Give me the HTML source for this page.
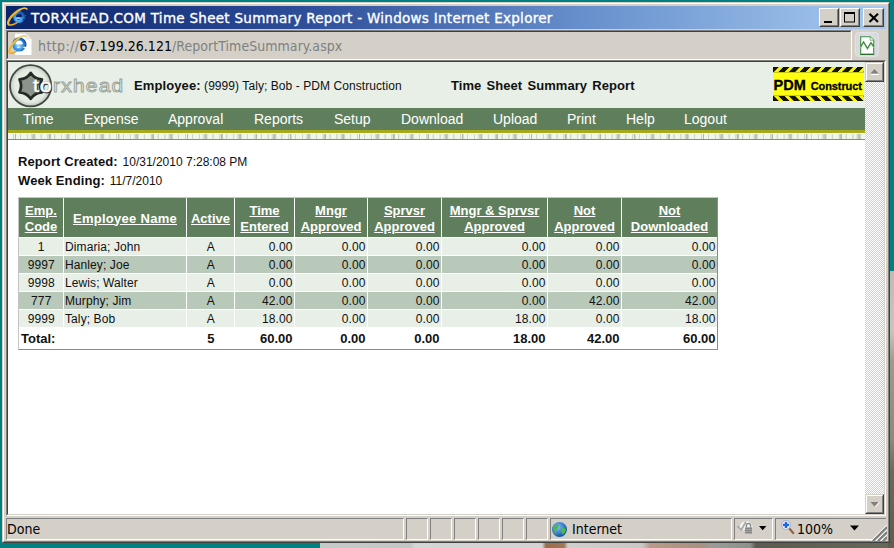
<!DOCTYPE html>
<html>
<head>
<meta charset="utf-8">
<title>TORXHEAD.COM Time Sheet Summary Report</title>
<style>
*{box-sizing:border-box;margin:0;padding:0}
html,body{width:894px;height:548px;overflow:hidden}
body{position:relative;background:#008080;font-family:"Liberation Sans",sans-serif;}
.abs{position:absolute}
#deskphoto{left:320px;top:542px;width:574px;height:6px;background:linear-gradient(90deg,#c6cac9 0,#c2c6c5 90px,#d4d6d5 95px,#d2d3d2 222px,#9a6f4c 226px,#a07858 244px,#cfd0ce 248px,#c8c9c7 322px,#b89a8a 330px,#a89080 380px,#9a9c98 392px,#8e908c 430px,#5a5c50 436px,#66685c 574px);}
#win{left:2px;top:2px;width:888px;height:541px;background:#d4d0c8;border:1px solid;border-color:#d4d0c8 #404040 #404040 #d4d0c8;}
#win2{left:0;top:0;width:886px;height:539px;border:1px solid;border-color:#fff #808080 #808080 #fff;}
#title{left:6px;top:6px;width:880px;height:22.5px;background:linear-gradient(90deg,#0a246a 0,#2c4c98 33%,#6890cc 66%,#a6caf0 100%);}
#title .txt{left:25px;top:2.6px;color:#fff;font-family:"DejaVu Sans","Liberation Sans",sans-serif;font-size:13.5px;letter-spacing:.28px;-webkit-text-stroke:.35px #fff;line-height:19px;white-space:nowrap;}
.tbtn{top:8px;width:20px;height:19px;background:#d4d0c8;border:1px solid;border-color:#fff #404040 #404040 #fff;}
.tbtn:after{content:"";position:absolute;left:0;top:0;right:0;bottom:0;border:1px solid;border-color:#d4d0c8 #808080 #808080 #d4d0c8;}
#addr{left:6px;top:30px;width:846px;height:30px;border:1px solid;border-color:#808080 #fff #fff #808080;background:#d4d0c8;}
#addr:after{content:"";position:absolute;left:0;top:0;right:0;bottom:0;border:1px solid;border-color:#404040 #d4d0c8 #d4d0c8 #404040;}
#addr .txt{left:31px;top:6px;font-family:"DejaVu Sans Condensed","DejaVu Sans","Liberation Sans",sans-serif;font-size:14px;letter-spacing:.04px;line-height:19px;color:#808080;white-space:nowrap;}
#addr .txt b{font-weight:normal;color:#000}
#frame{left:6px;top:60px;width:880px;height:456px;border:1px solid;border-color:#808080 #fff #fff #808080;background:#fff;}
#frame:after{content:"";position:absolute;left:0;top:0;right:0;bottom:0;border:1px solid;border-color:#404040 #d4d0c8 #d4d0c8 #404040;}
#page{left:8px;top:62px;width:857px;height:452px;background:#fff;overflow:hidden;}
#hdr{left:0;top:0;width:857px;height:46px;background:#e7efe7;}
#menu{left:0;top:46px;width:857px;height:22px;background:#5f7f5c;}
#menu span{position:absolute;top:2px;color:#fff;font-size:14px;line-height:18px;white-space:nowrap;}
#oline{left:0;top:68px;width:857px;height:3px;background:#a5a91c;}
#pat{left:0;top:71px;width:857px;height:7px;background-color:#f1f6ea;border-top:1px solid #fbfbd2;border-bottom:1px solid #7f8f7c;
 background-image:repeating-linear-gradient(90deg,transparent 0,transparent 6.500px,rgba(110,130,100,.5) 7px,rgba(110,130,100,.5) 8px,transparent 8.500px,transparent 22px,rgba(105,125,105,.38) 25px,transparent 28.500px,transparent 34.400px),repeating-linear-gradient(90deg,transparent 0,transparent 4.700px,rgba(150,175,140,.4) 5.200px,rgba(150,175,140,.4) 5.900px,transparent 6.400px,transparent 6.880px);}
#vsb{left:864.5px;top:62px;width:19.5px;height:452px;background:#eceae4;
 background-image:conic-gradient(#fff 25%,#d4d0c8 0 50%,#fff 0 75%,#d4d0c8 0);background-size:2px 2px;}
.sbtn{left:0;width:19.5px;height:19.5px;background:#d4d0c8;border:1px solid;border-color:#d4d0c8 #404040 #404040 #d4d0c8;}
.sbtn:after{content:"";position:absolute;left:0;top:0;right:0;bottom:0;border:1px solid;border-color:#fff #808080 #808080 #fff;}
#status{left:6px;top:518px;width:880px;height:22px;}
.pane{top:0;height:22px;border:1px solid;border-color:#808080 #fff #fff #808080;}
.stxt{margin-top:1px;font-family:"DejaVu Sans Condensed","DejaVu Sans",sans-serif;font-size:14px;line-height:19px;color:#000;white-space:nowrap;}
#tw{left:10px;top:135px;width:700px;height:153px;border:1px solid;border-color:#c4c4c4 #8c8c8c #8c8c8c #c4c4c4;background:#fff;overflow:hidden}
table#t{position:absolute;left:-1px;top:-1px;width:700px;table-layout:fixed;border-collapse:separate;border-spacing:1px;background:#fff;font-size:12px;color:#111;}
#t th{background:#5f7f5c;color:#fff;font-weight:bold;font-size:13px;line-height:16px;text-decoration:underline;height:39px;vertical-align:middle;text-align:center;padding:2px 0 0 0;white-space:nowrap}
#t td{height:17px;line-height:15px;padding:2px 1.5px 0 2px;text-align:right;white-space:nowrap;letter-spacing:.1px}
#t tr.a td{background:#e7efe7}
#t tr.b td{background:#b9c9b9}
#t tr.tot td.l{padding-left:2px}
#t tr.tot td{background:#fff;font-weight:bold;height:21px;line-height:20px;padding-top:1px;font-size:13px;color:#111;letter-spacing:0}
#t td.c{text-align:center}
#t td.l{text-align:left;padding-left:1px}
</style>
</head>
<body>
<div id="deskphoto" class="abs"></div>
<div class="abs" style="left:888px;top:271px;width:6px;height:277px;background:linear-gradient(180deg,#bcbcb4 0,#c6c6be 60px,#9c9c8e 90px,#8a8a7a 170px,#6a6a5a 200px,#5e5e50 277px)"></div>
<div id="win" class="abs"><div id="win2" class="abs"></div></div>

<div id="title" class="abs">
  <svg class="abs" style="left:0px;top:0px;overflow:visible" width="24" height="22" viewBox="0 0 24 22">
    <defs><radialGradient id="eg" gradientUnits="userSpaceOnUse" cx="12" cy="12.500" r="8"><stop offset="0" stop-color="#9be0ff"/><stop offset=".45" stop-color="#3c9cf0"/><stop offset="1" stop-color="#0b3f9c"/></radialGradient></defs>
    <path d="M18.65 9.57 L18.13 10.23 L17.57 10.88 L16.98 11.54 L16.35 12.19 L15.69 12.83 L15.02 13.45 L14.32 14.06 L13.60 14.65 L12.87 15.21 L12.14 15.74 L11.40 16.24 L10.66 16.71 L9.93 17.14 L9.21 17.53 L8.50 17.88 L7.82 18.18 L7.16 18.44 L6.52 18.64 L5.91 18.80 L5.34 18.91 L4.81 18.97 L4.32 18.98 L3.88 18.94 L3.48 18.84 L3.13 18.70 L2.83 18.50 L2.59 18.26 L2.40 17.97" fill="none" stroke="#e2a626" stroke-width="1.7" stroke-linecap="round"/><path d="M8.20 12.20 H19.15" stroke="url(#eg)" stroke-width="2.1" fill="none"/><path d="M17.70 12.50 A4.75 4.75 0 1 0 16.93 13.89" stroke="url(#eg)" stroke-width="2.9" fill="none"/>
    <path d="M2.61 18.29 L2.43 18.02 L2.29 17.71 L2.20 17.36 L2.17 16.97 L2.19 16.54 L2.27 16.08 L2.39 15.59 L2.57 15.07 L2.80 14.52 L3.08 13.95 L3.41 13.37 L3.78 12.77 L4.19 12.15 L4.65 11.53 L5.15 10.90 L5.68 10.27 L6.25 9.64 L6.85 9.02 L7.47 8.40 L8.12 7.80 L8.79 7.21 L9.47 6.64 L10.17 6.09 L10.87 5.57 L11.58 5.07 L12.29 4.61 L12.99 4.18 L13.69 3.78" fill="none" stroke="#efb92e" stroke-width="2.3" stroke-linecap="round"/><path d="M13.69 3.78 L14.07 3.58 L14.44 3.39 L14.81 3.22 L15.18 3.05 L15.54 2.90 L15.89 2.76 L16.23 2.63 L16.57 2.52 L16.90 2.42 L17.22 2.34 L17.53 2.26 L17.83 2.21 L18.12 2.16 L18.40 2.13 L18.67 2.12 L18.92 2.12 L19.17 2.13 L19.40 2.16 L19.62 2.20 L19.82 2.26 L20.01 2.33 L20.19 2.41 L20.35 2.51 L20.50 2.62 L20.63 2.74 L20.75 2.88 L20.85 3.03 L20.94 3.20" fill="none" stroke="#efc85a" stroke-width="1.5" stroke-linecap="round"/>
  </svg>
  <div class="txt abs">TORXHEAD.COM Time Sheet Summary Report - Windows Internet Explorer</div>
</div>
<div class="tbtn abs" style="left:819px"><svg class="abs" style="left:0;top:0" width="18" height="16"><rect x="4" y="12" width="8" height="2" fill="#000"/></svg></div>
<div class="tbtn abs" style="left:840px"><svg class="abs" style="left:0;top:0" width="18" height="16"><rect x="3.5" y="4" width="10" height="9" fill="none" stroke="#000" stroke-width="1"/><rect x="3" y="3" width="11" height="2" fill="#000"/></svg></div>
<div class="tbtn abs" style="left:863px;width:21px"><svg class="abs" style="left:0;top:0" width="19" height="16"><path d="M5.500 4.800 L14 13 M14 4.800 L5.500 13" stroke="#000" stroke-width="2.1" fill="none"/></svg></div>

<div id="addr" class="abs">
  <svg class="abs" style="left:1px;top:1px" width="26" height="25" viewBox="0 0 26 25">
    <defs><radialGradient id="eg2" gradientUnits="userSpaceOnUse" cx="10.500" cy="13.500" r="9"><stop offset="0" stop-color="#9be0ff"/><stop offset=".45" stop-color="#3c9cf0"/><stop offset="1" stop-color="#0b3f9c"/></radialGradient></defs>
    <path d="M7 1.800 H18.300 L23.500 7 V23 H7 Z" fill="#fff"/><path d="M18.300 1.800 V7 H23.500 Z" fill="#ececec" stroke="#d4d4d4" stroke-width=".5"/>
    <path d="M16.29 10.68 L15.86 11.35 L15.39 12.03 L14.89 12.71 L14.36 13.40 L13.80 14.07 L13.22 14.74 L12.62 15.39 L12.00 16.02 L11.36 16.63 L10.72 17.22 L10.07 17.77 L9.42 18.30 L8.77 18.78 L8.13 19.23 L7.50 19.64 L6.88 20.00 L6.28 20.32 L5.70 20.59 L5.14 20.81 L4.62 20.98 L4.12 21.09 L3.66 21.16 L3.24 21.17 L2.86 21.13 L2.52 21.03 L2.22 20.88 L1.97 20.68 L1.77 20.43" fill="none" stroke="#e2a626" stroke-width="1.7" stroke-linecap="round"/><path d="M5.55 13.60 H18.20" stroke="url(#eg2)" stroke-width="2.4" fill="none"/><path d="M16.55 13.90 A5.5 5.5 0 1 0 15.66 15.70" stroke="url(#eg2)" stroke-width="3.3" fill="none"/>
    <path d="M2.00 20.71 L1.79 20.48 L1.64 20.20 L1.53 19.88 L1.46 19.51 L1.44 19.11 L1.47 18.67 L1.55 18.19 L1.67 17.69 L1.84 17.15 L2.05 16.58 L2.30 15.99 L2.60 15.39 L2.93 14.76 L3.31 14.12 L3.72 13.48 L4.17 12.82 L4.64 12.17 L5.15 11.51 L5.68 10.86 L6.24 10.22 L6.81 9.59 L7.40 8.98 L8.01 8.39 L8.62 7.81 L9.24 7.27 L9.87 6.75 L10.49 6.27 L11.11 5.81" fill="none" stroke="#efb92e" stroke-width="2.3" stroke-linecap="round"/><path d="M11.11 5.81 L11.45 5.58 L11.79 5.36 L12.12 5.15 L12.45 4.95 L12.77 4.77 L13.09 4.60 L13.40 4.44 L13.71 4.30 L14.01 4.16 L14.30 4.05 L14.59 3.94 L14.87 3.86 L15.14 3.78 L15.40 3.72 L15.65 3.68 L15.89 3.65 L16.12 3.63 L16.34 3.63 L16.55 3.64 L16.74 3.67 L16.93 3.72 L17.10 3.78 L17.26 3.85 L17.41 3.94 L17.55 4.04 L17.67 4.15 L17.78 4.28 L17.87 4.43" fill="none" stroke="#efc85a" stroke-width="1.5" stroke-linecap="round"/>
  </svg>
  <div class="txt abs"><span style="letter-spacing:.4px">http://</span><b>67.199.26.121</b>/ReportTimeSummary.aspx</div>
</div>
<div class="abs" style="left:855px;top:32px;width:24px;height:25px;border:1px solid #e2e2e8;border-radius:3.500px;background:linear-gradient(90deg,#d9d8da,#dddde6 50%,#d9d8da)">
  <svg class="abs" style="left:3px;top:2px" width="18" height="21" viewBox="0 0 18 21"><path d="M1.700 1.800 H11.200 L14.700 5.300 V19.400 H1.700 Z" fill="#fff" stroke="#3f8f43" stroke-width="1.100"/><path d="M11.200 1.800 V5.300 H14.700" fill="#f2f6f2" stroke="#6aaa6c" stroke-width=".8"/><path d="M1.700 19.400 H14.700" stroke="#2c6e30" stroke-width="1.200"/><path d="M1.700 12.700 L4.600 8 L8.400 14.400 L12 8.600 L14.700 12.700" fill="none" stroke="#a4d4a6" stroke-width="1.100"/><path d="M1.700 11.500 L4.600 6.800 L8.400 13.200 L12 7.400 L14.700 11.500" fill="none" stroke="#2f7d33" stroke-width="1.100"/></svg>
</div>

<div id="frame" class="abs"></div>
<div id="page" class="abs">
  <div id="hdr" class="abs">
    <svg class="abs" style="left:0;top:0" width="125" height="46" viewBox="0 0 125 46">
      <defs><radialGradient id="cg" cx="50%" cy="50%" r="50%"><stop offset="0" stop-color="#f4f8f2"/><stop offset=".8" stop-color="#e2eadf"/><stop offset="1" stop-color="#b9c4b8"/></radialGradient></defs>
      <circle cx="22.6" cy="23.7" r="20.6" fill="url(#cg)" stroke="#434843" stroke-width="1.8"/>
      <path d="M22.70 11.00 Q26.70 16.97 33.87 17.45 Q30.70 23.90 33.87 30.35 Q26.70 30.83 22.70 36.80 Q18.70 30.83 11.53 30.35 Q14.70 23.90 11.53 17.45 Q18.70 16.97 22.70 11.00Z" fill="#8a948a" stroke="#262a26" stroke-width="2.8" stroke-linejoin="round"/>
      <g transform="translate(25 30) scale(1.1 1)"><text x="0" y="0" font-family="Liberation Sans,sans-serif" font-size="19" letter-spacing="1.15" fill="#f2f6f1" stroke="#9aa39a" stroke-width=".95">torxhead</text>
      <text x="0.6" y="0.6" font-family="Liberation Sans,sans-serif" font-size="19" letter-spacing="1.15" fill="#333" stroke="#333" stroke-width=".9">to</text>
      <text x="0" y="0" font-family="Liberation Sans,sans-serif" font-size="19" letter-spacing="1.15" fill="#fff" stroke="#fff" stroke-width=".5">to</text></g>
    </svg>
    <div class="abs" style="left:126px;top:16px;font-size:12px;line-height:16px;white-space:nowrap;color:#111;letter-spacing:.07px"><b style="font-size:13px;letter-spacing:.1px">Employee:</b> (9999) Taly; Bob - PDM Construction</div>
    <div class="abs" style="left:443px;top:16px;font-size:13px;line-height:16px;font-weight:bold;white-space:nowrap;color:#111;word-spacing:1.6px;letter-spacing:.05px">Time Sheet Summary Report</div>
    <div class="abs" style="left:765px;top:5px;width:91px;height:34px;background:#ffff10;overflow:hidden">
      <div class="abs" style="left:0;top:0;width:91px;height:5px;background:repeating-linear-gradient(135deg,#141400 0,#141400 3.9px,#f4f410 4.4px,#f4f410 7px,#141400 7.5px);border-bottom:0"></div>
      <div class="abs" style="left:0;top:5px;width:91px;height:1px;background:#c8c818"></div>
      <div class="abs" style="left:0;top:28px;width:91px;height:1px;background:#c8c818"></div>
      <div class="abs" style="left:0;top:29px;width:91px;height:5px;background:repeating-linear-gradient(45deg,#141400 0,#141400 3.9px,#f4f410 4.4px,#f4f410 7px,#141400 7.5px)"></div>
      <div class="abs" style="left:.5px;top:10px;font-weight:bold;font-size:14.5px;line-height:16px;color:#000;white-space:nowrap;-webkit-text-stroke:.3px #000">PDM<span style="font-size:11px;letter-spacing:-.1px;margin-left:5px">Construct</span></div>
    </div>
  </div>
  <div id="menu" class="abs">
    <span style="left:15px">Time</span><span style="left:76px">Expense</span><span style="left:160px">Approval</span><span style="left:246px">Reports</span><span style="left:326px">Setup</span><span style="left:393px">Download</span><span style="left:485px">Upload</span><span style="left:559px">Print</span><span style="left:618px">Help</span><span style="left:676px">Logout</span>
  </div>
  <div id="oline" class="abs"></div>
  <div id="pat" class="abs"></div>
  <div class="abs" style="left:10px;top:92px;font-size:12px;line-height:16px;white-space:nowrap;color:#111"><b style="font-size:13px;letter-spacing:.1px;margin-right:1.5px">Report Created:</b> 10/31/2010 7:28:08 PM</div>
  <div class="abs" style="left:10px;top:111px;font-size:12px;line-height:16px;white-space:nowrap;color:#111"><b style="font-size:13px;letter-spacing:.1px;margin-right:1.5px">Week Ending:</b> 11/7/2010</div>

  <div id="tw" class="abs"><table id="t" cellspacing="1">
    <tr><th style="width:44px">Emp.<br>Code</th><th style="width:122px;letter-spacing:.28px">Employee Name</th><th style="width:47px">Active</th><th style="width:59px">Time<br>Entered</th><th style="width:72px">Mngr<br>Approved</th><th style="width:73px">Sprvsr<br>Approved</th><th style="width:105px">Mngr &amp; Sprvsr<br>Approved</th><th style="width:73px">Not<br>Approved</th><th style="width:95px">Not<br>Downloaded</th></tr>
    <tr class="a"><td class="c">1</td><td class="l">Dimaria; John</td><td class="c">A</td><td>0.00</td><td>0.00</td><td>0.00</td><td>0.00</td><td>0.00</td><td>0.00</td></tr>
    <tr class="b"><td class="c">9997</td><td class="l">Hanley; Joe</td><td class="c">A</td><td>0.00</td><td>0.00</td><td>0.00</td><td>0.00</td><td>0.00</td><td>0.00</td></tr>
    <tr class="a"><td class="c">9998</td><td class="l">Lewis; Walter</td><td class="c">A</td><td>0.00</td><td>0.00</td><td>0.00</td><td>0.00</td><td>0.00</td><td>0.00</td></tr>
    <tr class="b"><td class="c">777</td><td class="l">Murphy; Jim</td><td class="c">A</td><td>42.00</td><td>0.00</td><td>0.00</td><td>0.00</td><td>42.00</td><td>42.00</td></tr>
    <tr class="a"><td class="c">9999</td><td class="l">Taly; Bob</td><td class="c">A</td><td>18.00</td><td>0.00</td><td>0.00</td><td>18.00</td><td>0.00</td><td>18.00</td></tr>
    <tr class="tot"><td class="l" colspan="2">Total:</td><td class="c">5</td><td>60.00</td><td>0.00</td><td>0.00</td><td>18.00</td><td>42.00</td><td>60.00</td></tr>
  </table></div>
</div>

<div id="vsb" class="abs">
  <div class="sbtn abs" style="top:0"><svg class="abs" style="left:.5px;top:0" width="17" height="16"><path d="M4.5 10.5 L8.5 6 L12.5 10.5 Z" fill="#808080"/><path d="M5 11.5 H13" stroke="#fff" stroke-width="1"/></svg></div>
  <div class="sbtn abs" style="bottom:0;height:20px"><svg class="abs" style="left:.5px;top:1px" width="17" height="16"><path d="M4.5 6 L8.5 10.5 L12.5 6 Z" fill="#808080"/><path d="M9.5 11 L13.5 6.5" stroke="#fff" stroke-width="1"/></svg></div>
</div>

<div id="status" class="abs">
  <div class="pane abs" style="left:0;width:398px"><div class="stxt abs" style="left:0;top:0">Done</div></div>
  <div class="pane abs" style="left:400px;width:22px"></div>
  <div class="pane abs" style="left:424px;width:22px"></div>
  <div class="pane abs" style="left:448px;width:22px"></div>
  <div class="pane abs" style="left:472px;width:22px"></div>
  <div class="pane abs" style="left:496px;width:22px"></div>
  <div class="pane abs" style="left:520px;width:22px"></div>
  <div class="pane abs" style="left:544px;width:182px">
    <svg class="abs" style="left:0;top:1.5px" width="17" height="17" viewBox="0 0 17 17"><defs><radialGradient id="gg" cx="40%" cy="35%" r="65%"><stop offset="0" stop-color="#7ec0ff"/><stop offset="1" stop-color="#1450a8"/></radialGradient></defs><circle cx="8.5" cy="8.5" r="7.5" fill="url(#gg)"/><path d="M4 4 C6 3 8 4 7.5 6 C7 8 5 7.5 4.5 9.5 C4 11 6 12 5.5 14 C3 12 1.5 8 4 4 Z M10 7 C12 6 14.5 7 15 9 C14.5 11.5 13 13 11.5 13.5 C11 11.5 9 10 10 7 Z" fill="#4cb848"/></svg>
    <div class="stxt abs" style="left:21px;top:0">Internet</div>
  </div>
  <div class="pane abs" style="left:728px;width:39px">
    <svg class="abs" style="left:0;top:0" width="37" height="19" viewBox="0 0 37 19">
      <path d="M6.5 12.5 A6.3 6.3 0 1 1 17.5 8.5 L12 8.5 Z" fill="#f4f4f2"/>
      <path d="M2.5 7 L6.3 11 L11 2.5" fill="none" stroke="#a9a9a6" stroke-width="1.8"/>
      <path d="M11.4 8.5 V6.6 A2.1 2.1 0 0 1 15.6 6.6 V8.5" fill="none" stroke="#8a8a8a" stroke-width="1.3"/>
      <rect x="10" y="8.5" width="7" height="6" fill="#858585"/>
      <path d="M10 10.5 H17 M10 12.5 H17" stroke="#a8a8a8" stroke-width=".8"/>
      <path d="M24 7 H31.4 L27.7 11.2 Z" fill="#000"/>
    </svg>
  </div>
  <div class="pane abs" style="left:769px;width:111px;border-right:0">
    <svg class="abs" style="left:0;top:0" width="22" height="19" viewBox="0 0 22 19">
      <path d="M13.3 9.6 L17.2 14" stroke="#9a6038" stroke-width="2.2" stroke-linecap="round"/>
      <circle cx="10" cy="6" r="4.3" fill="#fafcff" stroke="#a9b6d2" stroke-width="1.3"/>
      <path d="M7 6 H13 M10 3 V9" stroke="#1c68de" stroke-width="2.4"/>
    </svg>
    <div class="stxt abs" style="left:21px;top:0">100%</div>
    <svg class="abs" style="left:73px;top:6px" width="12" height="7"><path d="M1 0.500 H10 L5.500 5.500 Z" fill="#000"/></svg>
    <svg class="abs" style="left:94px;top:5px" width="17" height="17"><path d="M17 3 L3 17 M17 8 L8 17 M17 13 L13 17" stroke="#808080" stroke-width="2.3"/><path d="M17 .8 L.8 17 M17 5.800 L5.800 17 M17 10.800 L10.800 17" stroke="#fff" stroke-width="1"/></svg>
  </div>
</div>


</body>
</html>
